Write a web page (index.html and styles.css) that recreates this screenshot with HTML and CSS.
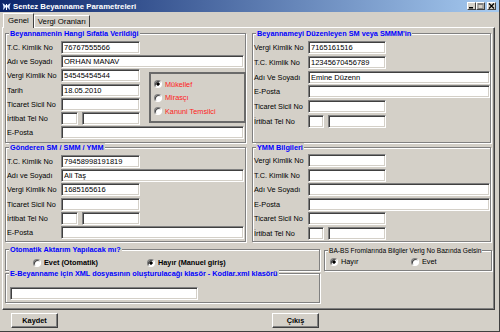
FILE: index.html
```html
<!DOCTYPE html>
<html lang="tr">
<head>
    <meta charset="UTF-8">
    <title>Sentez Beyanname Parametreleri</title>
    <link rel="stylesheet" href="styles.css">
</head>
<body>

<div class="window">
    <div class="titlebar">
        <svg class="app-icon" width="9" height="9" viewBox="0 0 9 9">
            <path d="M0.5 1 L4 3.5 L4 5 L1 8 L1.5 5 Z M8.5 1 L5 3.5 L5 5 L8 8 L7.5 5 Z" fill="#dbe8ff"/>
            <rect x="4" y="2" width="1" height="6" fill="#fff"/>
        </svg>
        <span class="title">Sentez Beyanname Parametreleri</span>
        <div class="ctrls">
            <span class="ctrl"><svg width="7" height="6"><rect x="1" y="4" width="4" height="1.5" fill="#000"/></svg></span>
            <span class="ctrl"><svg width="7" height="6"><rect x="1" y="0.5" width="5" height="5" fill="none" stroke="#808080"/><rect x="1" y="0.5" width="5" height="1.5" fill="#808080"/></svg></span>
            <span class="ctrl close"><svg width="7" height="6"><path d="M1 0.5 L6 5.5 M6 0.5 L1 5.5" stroke="#000" stroke-width="1.2"/></svg></span>
        </div>
    </div>

    <div class="content">
        <div class="tabs">
            <span class="tab active">Genel</span>
            <span class="tab">Vergi Oranları</span>
        </div>

        <div class="panel">
            <div class="groups">
                <!-- Beyannamenin hangi sifatla verildigi -->
                <div class="group">
                    <span class="legend">Beyannamenin Hangi Sıfatla Verildiği</span>
                    <div class="form form-left">
                        <span class="lbl">T.C. Kimlik No</span>
                        <input class="field" type="text" value="76767555566">
                        <span class="lbl">Adı ve Soyadı</span>
                        <input class="field wide" type="text" value="ORHAN MANAV">
                        <span class="lbl">Vergi Kimlik No</span>
                        <input class="field" type="text" value="54545454544">
                        <span class="lbl">Tarih</span>
                        <input class="field" type="text" value="18.05.2010">
                        <span class="lbl">Ticaret Sicil No</span>
                        <input class="field" type="text" value="">
                        <span class="lbl">İrtibat Tel No</span>
                        <div class="tel">
                            <input class="field small" type="text" value="">
                            <input class="field" type="text" value="">
                        </div>
                        <span class="lbl">E-Posta</span>
                        <input class="field wide" type="text" value="">

                        <div class="sifat">
                            <label class="opt red"><span class="radio on"></span>Mükellef</label>
                            <label class="opt red"><span class="radio"></span>Mirasçı</label>
                            <label class="opt red"><span class="radio"></span>Kanuni Temsilci</label>
                        </div>
                    </div>
                </div>

                <!-- Beyannameyi duzenleyen -->
                <div class="group">
                    <span class="legend">Beyannameyi Düzenleyen SM veya SMMM'in</span>
                    <div class="form form-right">
                        <span class="lbl">Vergi Kimlik No</span>
                        <input class="field" type="text" value="7165161516">
                        <span class="lbl">T.C. Kimlik No</span>
                        <input class="field" type="text" value="12345670456789">
                        <span class="lbl">Adı Ve Soyadı</span>
                        <input class="field wide" type="text" value="Emine Düzenn">
                        <span class="lbl">E-Posta</span>
                        <input class="field wide" type="text" value="">
                        <span class="lbl">Ticaret Sicil No</span>
                        <input class="field" type="text" value="">
                        <span class="lbl">İrtibat Tel No</span>
                        <div class="tel">
                            <input class="field small" type="text" value="">
                            <input class="field" type="text" value="">
                        </div>
                    </div>
                </div>

                <!-- Gonderen -->
                <div class="group">
                    <span class="legend">Gönderen SM / SMM / YMM</span>
                    <div class="form form-left">
                        <span class="lbl">T.C. Kimlik No</span>
                        <input class="field" type="text" value="79458998191819">
                        <span class="lbl">Adı ve Soyadı</span>
                        <input class="field wide" type="text" value="Ali Taş">
                        <span class="lbl">Vergi Kimlik No</span>
                        <input class="field" type="text" value="1685165616">
                        <span class="lbl">Ticaret Sicil No</span>
                        <input class="field" type="text" value="">
                        <span class="lbl">İrtibat Tel No</span>
                        <div class="tel">
                            <input class="field small" type="text" value="">
                            <input class="field" type="text" value="">
                        </div>
                        <span class="lbl">E-Posta</span>
                        <input class="field wide" type="text" value="">
                    </div>
                </div>

                <!-- YMM -->
                <div class="group">
                    <span class="legend">YMM Bilgileri</span>
                    <div class="form form-right ymm">
                        <span class="lbl">Vergi Kimlik No</span>
                        <input class="field" type="text" value="">
                        <span class="lbl">T.C. Kimlik No</span>
                        <input class="field" type="text" value="">
                        <span class="lbl">Adı Ve Soyadı</span>
                        <input class="field wide" type="text" value="">
                        <span class="lbl">E-Posta</span>
                        <input class="field wide" type="text" value="">
                        <span class="lbl">Ticaret Sicil No</span>
                        <input class="field" type="text" value="">
                        <span class="lbl">İrtibat Tel No</span>
                        <div class="tel">
                            <input class="field small" type="text" value="">
                            <input class="field" type="text" value="">
                        </div>
                    </div>
                </div>
            </div>

            <div class="bottom">
                <div class="group aktarim">
                    <span class="legend">Otomatik Aktarım Yapılacak mı?</span>
                    <div class="opts">
                        <label class="opt bold"><span class="radio"></span>Evet (Otomatik)</label>
                        <label class="opt bold"><span class="radio on"></span>Hayır (Manuel giriş)</label>
                    </div>
                </div>

                <div class="group babs">
                    <span class="legend plain">BA-BS Fromlarında Bilgiler Verig No Bazında Gelsin</span>
                    <div class="opts">
                        <label class="opt"><span class="radio on"></span>Hayır</label>
                        <label class="opt"><span class="radio"></span>Evet</label>
                    </div>
                </div>

                <div class="group xml">
                    <span class="legend">E-Beyanname için XML dosyasının oluşturulacağı klasör - Kodlar.xml klasörü</span>
                    <input class="field path" type="text" value="">
                </div>
            </div>
        </div>

        <div class="actions">
            <button class="btn">Kaydet</button>
            <button class="btn exit">Çıkış</button>
        </div>
    </div>
</div>

</body>
</html>
```

FILE: styles.css
```css
* {
    box-sizing: border-box;
}

body {
    margin: 0;
    background: #d4d0c8;
    font-family: "Liberation Sans", Arial, sans-serif;
    font-size: 7.3px;
    color: #000;
}

.window {
    width: 500px;
    height: 332px;
    background: #d4d0c8;
    border-right: 1px solid #404040;
    border-bottom: 1px solid #404040;
    display: flex;
    flex-direction: column;
}

/* title bar */
.titlebar {
    height: 12px;
    flex: none;
    background: linear-gradient(to right, #0a246a, #a6caf0);
    display: flex;
    align-items: center;
    padding: 0 3px 0 2px;
    color: #fff;
    font-weight: bold;
    font-size: 7.8px;
}

.app-icon {
    flex: none;
}

.title {
    flex: 1;
    margin-left: 2px;
}

.ctrls {
    display: flex;
}

.ctrl {
    width: 9px;
    height: 8px;
    background: #d4d0c8;
    border: 1px solid;
    border-color: #fff #404040 #404040 #fff;
    display: flex;
    align-items: center;
    justify-content: center;
}

.ctrl.close {
    margin-left: 2px;
}

/* content */
.content {
    flex: 1;
    display: flex;
    flex-direction: column;
    padding: 1px 4px 0 2px;
}

.tabs {
    height: 14px;
    display: flex;
    align-items: flex-end;
    padding-left: 1px;
}

.tab {
    height: 12px;
    line-height: 11px;
    padding: 0 3px;
    border: 1px solid;
    border-bottom: none;
    border-color: #fff #404040 #404040 #fff;
    font-size: 7.8px;
}

.tab.active {
    height: 15px;
    margin-bottom: -1px;
    padding: 0 4px;
    line-height: 13px;
    background: #d4d0c8;
    position: relative;
    z-index: 1;
}

.panel {
    height: 283px;
    border: 1px solid;
    border-color: #fff #404040 #404040 #fff;
    box-shadow: inset -1px -1px 0 #808080;
    padding: 5px 2px 0 2px;
}

.groups {
    display: grid;
    grid-template-columns: 241px 239px;
    grid-template-rows: 110px 95px;
    column-gap: 6px;
    row-gap: 4px;
}

.group {
    position: relative;
    border: 1px solid #808080;
    box-shadow: inset 1px 1px 0 #fff, 1px 1px 0 #fff;
    padding: 7px 0 0 1px;
}

.legend {
    position: absolute;
    top: -5px;
    left: 3px;
    padding: 0 1px;
    line-height: 9px;
    background: #d4d0c8;
    color: #0000ff;
    font-weight: bold;
    white-space: nowrap;
}

.legend.plain {
    color: #000;
    font-weight: normal;
    font-size: 6.6px;
}

/* label + field grids */
.form {
    display: grid;
    grid-auto-rows: 13px;
    row-gap: 1.2px;
}

.form-left {
    grid-template-columns: 54px 79px 9px 97px;
}

.form-right {
    grid-template-columns: 54px 78px 1fr;
    row-gap: 1.8px;
}

.form-right.ymm {
    margin-top: -1px;
    row-gap: 1.6px;
}

.lbl {
    grid-column: 1;
    line-height: 13px;
    white-space: nowrap;
}

.field {
    grid-column: 2;
    width: 100%;
    height: 13px;
    margin: 0;
    padding: 0 2px;
    font: inherit;
    font-size: 7.5px;
    color: #000;
    background: #fff;
    border: 1px solid;
    border-color: #808080 #fff #fff #808080;
    box-shadow: inset 1px 1px 0 #404040, inset -1px -1px 0 #d4d0c8;
    outline: none;
}

.field.wide {
    grid-column: 2 / -1;
}

.form-left .field.wide {
    width: 183px;
}

.form-right .field.wide {
    width: 182px;
}

.tel {
    grid-column: 2;
    display: flex;
    gap: 4px;
}

.tel .field {
    flex: 1;
}

.tel .field.small {
    flex: none;
    width: 17px;
}

.form-right .tel .field.small {
    width: 16px;
}

/* Mukellef / Mirasci / Kanuni Temsilci */
.sifat {
    grid-column: 4;
    grid-row: 3 / 7;
    margin: 3px 0 2px;
    border: 2px solid #6a6a6a;
    display: flex;
    flex-direction: column;
    justify-content: center;
    gap: 4.5px;
    padding-left: 3px;
}

.opt {
    display: flex;
    align-items: center;
    height: 9px;
    white-space: nowrap;
}

.opt.red {
    color: #ff2020;
}

.opt.bold {
    font-weight: bold;
}

.radio {
    flex: none;
    width: 8px;
    height: 8px;
    margin-right: 3px;
    border-radius: 50%;
    border: 1px solid;
    border-color: #808080 #fff #fff #808080;
    background: #fff;
    box-shadow: inset 1px 1px 0 #404040;
}

.radio.on {
    background: radial-gradient(circle, #000 0 1.4px, #fff 1.9px);
}

/* bottom part of the panel */
.bottom {
    margin-top: 7px;
    display: grid;
    grid-template-columns: 315px 168px;
    grid-template-rows: 22px 30px;
    column-gap: 4px;
    row-gap: 2px;
}

.aktarim {
    padding: 8px 0 0 27px;
}

.aktarim .opt:first-child {
    width: 114px;
}

.opts {
    display: flex;
}

.babs {
    height: 21px;
    margin-top: 1px;
    padding: 6px 0 0 5px;
}

.babs .opt:first-child {
    width: 81px;
}

.xml {
    grid-column: 1;
    padding: 13px 0 0 4px;
}

.field.path {
    width: 188px;
}

/* buttons */
.actions {
    display: flex;
    padding: 3px 0 0 9px;
}

.btn {
    width: 47px;
    height: 15px;
    padding: 0;
    font: inherit;
    font-weight: bold;
    background: #d4d0c8;
    border: 1px solid;
    border-color: #fff #404040 #404040 #fff;
    box-shadow: inset -1px -1px 0 #808080;
}

.btn.exit {
    margin-left: 214px;
}
```
